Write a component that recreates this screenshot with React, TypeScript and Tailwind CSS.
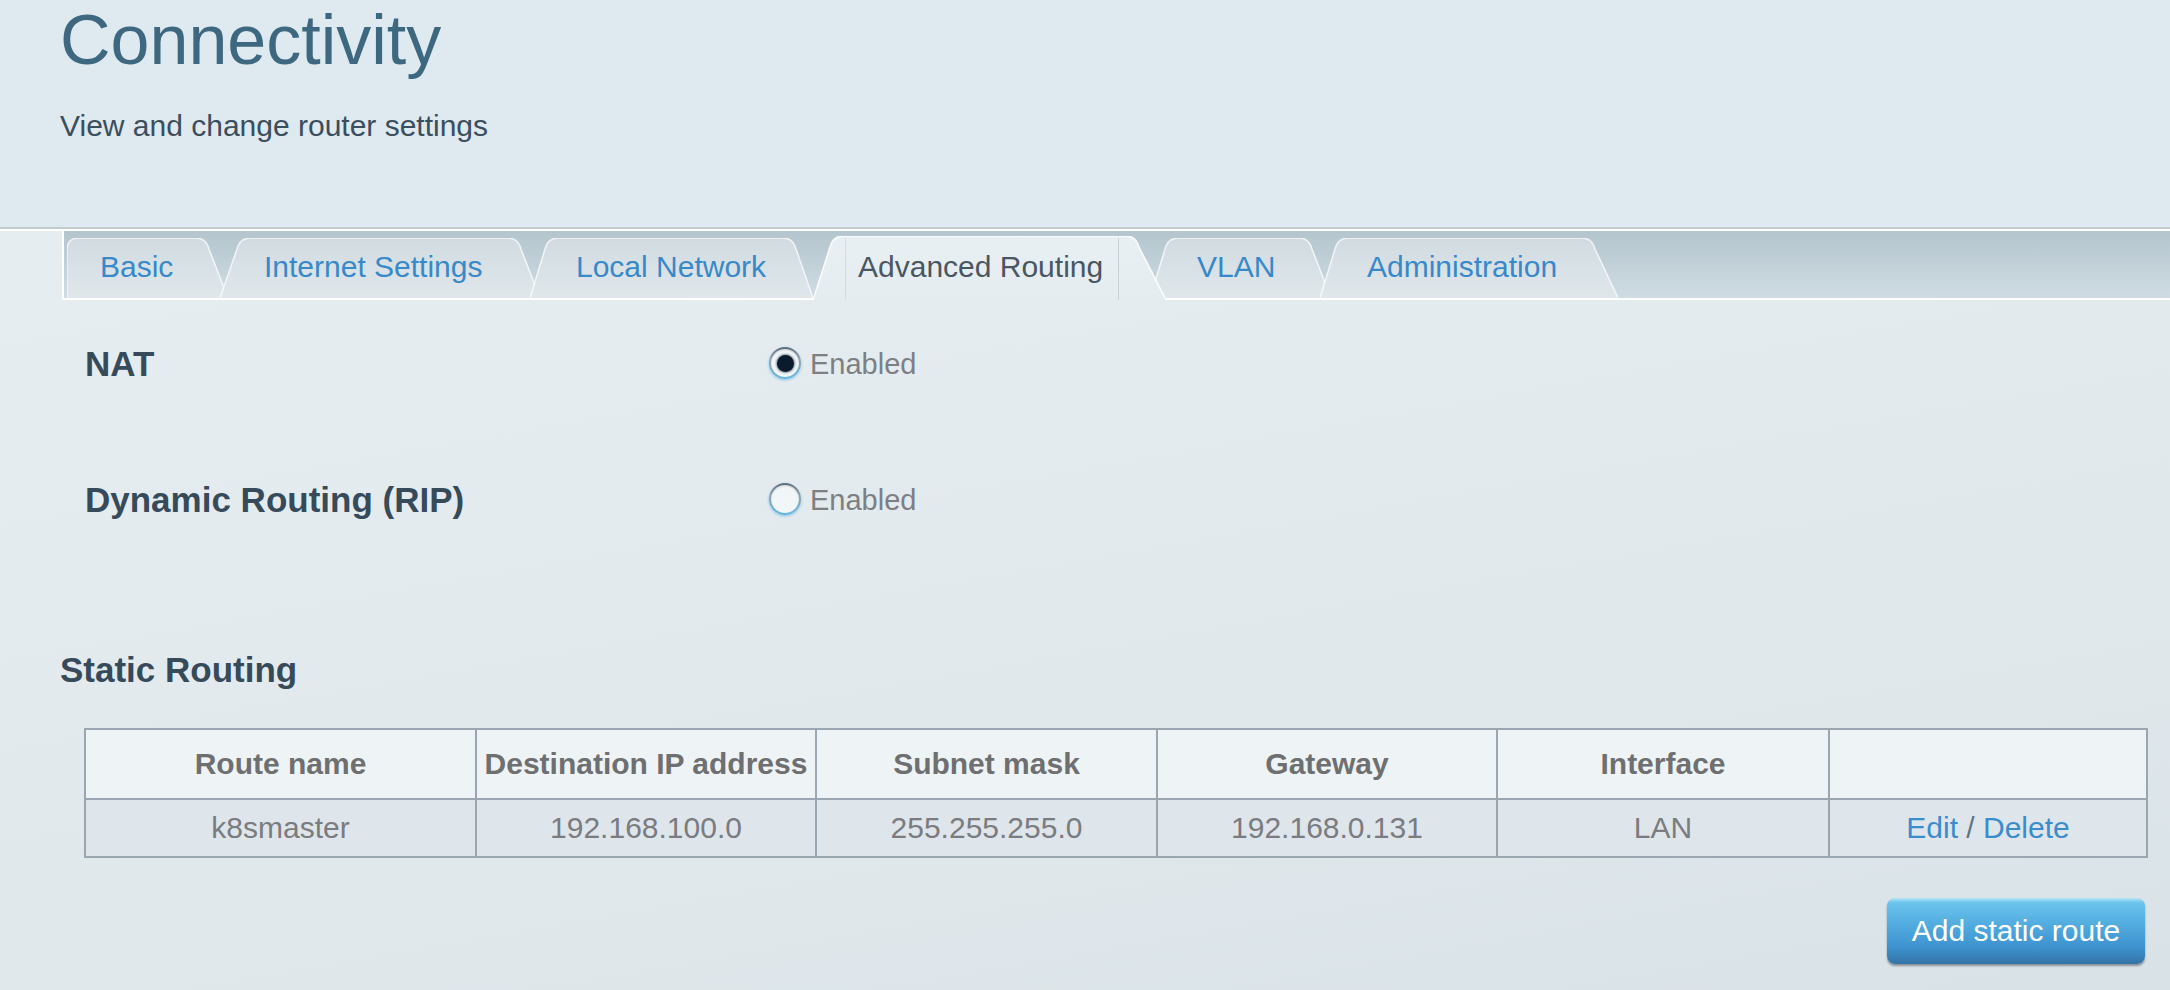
import React from "react";

type Tab = {
  label: string;
  w: number;
  h: number;
  sL: number;
  sR: number;
  first?: boolean;
  active?: boolean;
  cls: string;
};

const tabs: Tab[] = [
  { label: "Basic", w: 161, h: 60, sL: 20, sR: 24, first: true, cls: "w-[161px] h-[60px] pl-[33px]" },
  { label: "Internet Settings", w: 320, h: 60, sL: 22, sR: 24, cls: "w-[320px] h-[60px] ml-[-8px] pl-[44px]" },
  { label: "Local Network", w: 283, h: 60, sL: 20, sR: 22, cls: "w-[283px] h-[60px] ml-[-10px] pl-[46px]" },
  { label: "Advanced Routing", w: 353, h: 64, sL: 22, sR: 32, active: true, cls: "w-[353px] h-[64px] mb-[-2px] pl-[45px] z-10" },
  { label: "VLAN", w: 181, h: 60, sL: 20, sR: 24, cls: "w-[181px] h-[60px] ml-[-16px] pl-[47px]" },
  { label: "Administration", w: 298, h: 60, sL: 20, sR: 28, cls: "w-[298px] h-[60px] ml-[-11px] pl-[47px]" },
];

function tabPath(t: Tab) {
  const { w, h, sL, sR, first } = t;
  const left = first
    ? `M0,${h} L0,12 Q0,0 12,0`
    : `M0,${h} L${sL - 5},11 Q${sL - 2},0 ${sL + 8},0`;
  const right = `L${w - sR - 8},0 Q${w - sR + 2},0 ${w - sR + 5},11 L${w},${h}`;
  return `${left} ${right}`;
}

function TabItem({ t }: { t: Tab }) {
  const id = React.useId().replace(/:/g, "");
  const d = tabPath(t);
  return (
    <div className={`relative flex shrink-0 items-center pb-[2px] ${t.cls}`}>
      <svg
        className="absolute inset-0"
        width={t.w}
        height={t.h}
        viewBox={`0 0 ${t.w} ${t.h}`}
        preserveAspectRatio="none"
      >
        <defs>
          <linearGradient id={`g${id}`} x1="0" y1="0" x2="0" y2="1">
            {t.active ? (
              <>
                <stop offset="0" stopColor="#e9f0f3" />
                <stop offset="1" stopColor="#e5ecef" />
              </>
            ) : (
              <>
                <stop offset="0" stopColor="#d1dbe0" />
                <stop offset="1" stopColor="#dfe7eb" />
              </>
            )}
          </linearGradient>
        </defs>
        <path d={`${d} Z`} fill={`url(#g${id})`} />
        <path d={d} fill="none" stroke="#ffffff" strokeOpacity={t.active ? 0.9 : 0.75} strokeWidth={1.5} />
        {t.active && (
          <>
            <line x1="32.5" y1="2" x2="32.5" y2={t.h} stroke="#d3dbdf" strokeWidth="1" />
            <line x1="305.5" y1="2" x2="305.5" y2={t.h} stroke="#c9d2d7" strokeWidth="1" />
          </>
        )}
      </svg>
      <span
        className={`relative text-[30px] leading-[30px] whitespace-nowrap ${
          t.active ? "text-[#4a5661]" : "text-[#3889c9]"
        }`}
      >
        {t.label}
      </span>
    </div>
  );
}

function Radio({ checked }: { checked: boolean }) {
  return (
    <div className="h-[32px] w-[32px] rounded-full bg-[linear-gradient(to_bottom,#5b6b77_0%,#8fa3b0_40%,#62b6e2_100%)] p-[2px] shadow-[0_1px_3px_rgba(70,165,220,0.6)]">
      <div className="flex h-full w-full items-center justify-center rounded-full bg-[#f1f6f8] shadow-[inset_0_1px_2px_rgba(0,0,0,0.15)]">
        {checked && (
          <div className="h-[17px] w-[17px] rounded-full bg-[#0b1b2e] shadow-[0_0_2px_1px_rgba(11,27,46,0.5)]" />
        )}
      </div>
    </div>
  );
}

function SettingRow({ label, checked, cls }: { label: string; checked: boolean; cls: string }) {
  return (
    <div className={`flex h-[48px] items-center pl-[85px] ${cls}`}>
      <div className="w-[684px] text-[35px] font-bold leading-none text-[#364a5a]">{label}</div>
      <Radio checked={checked} />
      <span className="ml-[9px] pt-[2px] text-[29px] leading-none text-[#7d7f82]">Enabled</span>
    </div>
  );
}

const headCells = [
  { text: "Route name", cls: "w-[389px]" },
  { text: "Destination IP address", cls: "w-[340px] border-l-2" },
  { text: "Subnet mask", cls: "w-[341px] border-l-2" },
  { text: "Gateway", cls: "w-[340px] border-l-2" },
  { text: "Interface", cls: "w-[332px] border-l-2" },
  { text: "", cls: "flex-1 border-l-2" },
];

const rowCells = ["k8smaster", "192.168.100.0", "255.255.255.0", "192.168.0.131", "LAN"];

export default function App() {
  return (
    <div className="min-h-[990px] w-[2170px] overflow-hidden bg-[linear-gradient(170deg,#e7eef1_0%,#e4ebef_45%,#dfe7eb_75%,#d9e2e7_100%)] font-['Liberation_Sans',Arial,sans-serif]">
      {/* Header */}
      <div className="h-[229px] border-b-2 border-[#c3cbcf] bg-[#dfe9f0] pl-[60px] pt-[5px]">
        <div className="text-[70px] leading-none text-[#3e687f]">Connectivity</div>
        <div className="mt-[36px] text-[30px] leading-none text-[#3b4e5d]">View and change router settings</div>
      </div>
      <div className="h-[2px] bg-white" />

      {/* Tabs */}
      <div className="flex h-[69px]">
        <div className="w-[62px] shrink-0" />
        <div className="flex flex-1 items-end border-b-2 border-l-2 border-white bg-[linear-gradient(to_bottom,#b4c5cd,#cfdce3)] pl-[3px]">
          {tabs.map((t) => (
            <TabItem key={t.label} t={t} />
          ))}
        </div>
      </div>

      {/* Settings */}
      <SettingRow label="NAT" checked={true} cls="mt-[39px]" />
      <SettingRow label="Dynamic Routing (RIP)" checked={false} cls="mt-[88px]" />

      <div className="mt-[122px] flex h-[48px] items-center pl-[60px] text-[35px] font-bold leading-none text-[#364a5a]">
        Static Routing
      </div>

      {/* Table */}
      <div className="ml-[84px] mt-[35px] w-[2064px] border-2 border-[#9aa7b0]">
        <div className="flex h-[70px] border-b-2 border-[#9aa7b0] bg-[#eef3f6]">
          {headCells.map((c, i) => (
            <div
              key={i}
              className={`flex items-center justify-center border-[#9aa7b0] text-[30px] font-bold leading-none text-[#6e6f71] ${c.cls}`}
            >
              {c.text}
            </div>
          ))}
        </div>
        <div className="flex h-[56px] bg-[#dee6eb]">
          {headCells.map((c, i) => (
            <div
              key={i}
              className={`flex items-center justify-center border-[#9aa7b0] text-[30px] leading-none text-[#7a7c7f] ${c.cls}`}
            >
              {i < 5 ? (
                rowCells[i]
              ) : (
                <span>
                  <span className="text-[#3a8dcd]">Edit</span>
                  <span className="text-[#5f7686]"> / </span>
                  <span className="text-[#3a8dcd]">Delete</span>
                </span>
              )}
            </div>
          ))}
        </div>
      </div>

      {/* Button */}
      <div className="ml-[84px] mt-[40px] flex w-[2064px] justify-end">
        <button className="mr-[3px] h-[66px] w-[258px] rounded-[8px] bg-[linear-gradient(to_bottom,#b4e4f6_0%,#6bc4ec_7%,#52acdf_40%,#3e92cf_75%,#3473a6_100%)] text-[30px] leading-none text-white shadow-[0_2px_2px_rgba(40,50,60,0.45)]">
          Add static route
        </button>
      </div>
    </div>
  );
}
